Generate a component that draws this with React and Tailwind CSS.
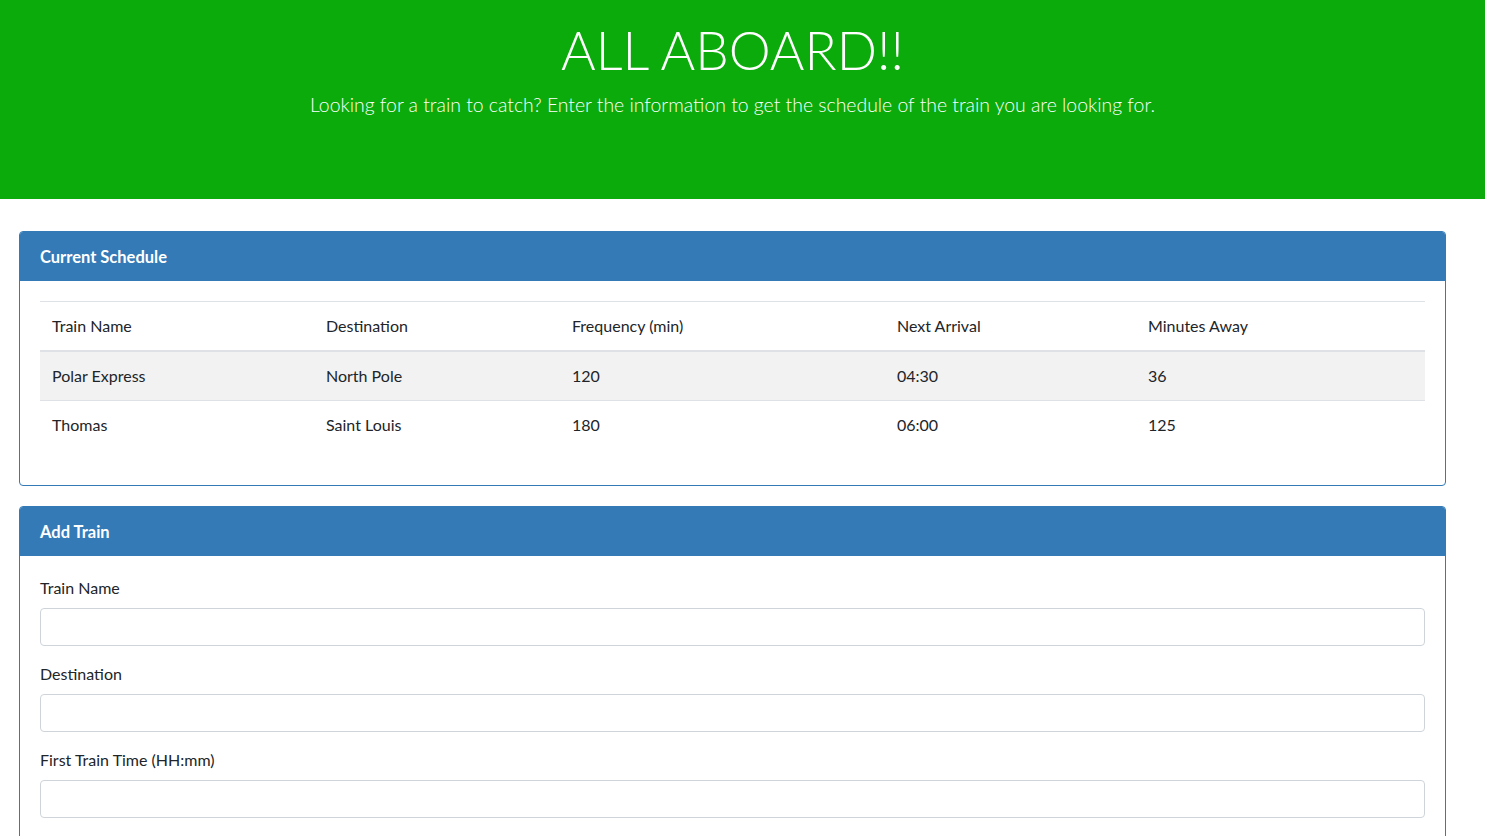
export default function App() {
  const trains = [
    { name: 'Polar Express', dest: 'North Pole', freq: 120, next: '04:30', away: 36 },
    { name: 'Thomas', dest: 'Saint Louis', freq: 180, next: '06:00', away: 125 },
  ];

  return (
    <div className="min-h-screen bg-white text-[#212529] font-['Lato','Open_Sans',sans-serif] text-base leading-6">
      {/* Jumbotron */}
      <div className="h-[199px] bg-[#0aab0a] text-white text-center pt-[16px] pr-[20px]">
        <h1 className="text-[53px] leading-[68px] font-light">ALL ABOARD!!</h1>
        <p className="mt-[6px] text-[19.4px] leading-[30px] font-light">
          Looking for a train to catch? Enter the information to get the schedule of the train you are looking for.
        </p>
      </div>

      <div className="pl-[19px] pr-[39px] pt-[32px]">
        {/* Schedule */}
        <div className="border border-[#337ab7] rounded-[4px] overflow-hidden">
          <div className="h-[49px] bg-[#337ab7] text-white font-bold text-[16.5px] px-[20px] flex items-center">
            Current Schedule
          </div>
          <div className="p-[20px]">
            <table className="w-full mb-[16px] border-collapse text-left">
              <thead>
                <tr className="border-t border-[#dee2e6] border-b-2">
                  <th className="w-[274px] font-normal px-[12px] py-[12px]">Train Name</th>
                  <th className="w-[246px] font-normal px-[12px] py-[12px]">Destination</th>
                  <th className="w-[325px] font-normal px-[12px] py-[12px]">Frequency (min)</th>
                  <th className="w-[251px] font-normal px-[12px] py-[12px]">Next Arrival</th>
                  <th className="font-normal px-[12px] py-[12px]">Minutes Away</th>
                </tr>
              </thead>
              <tbody>
                {trains.map((t, i) => (
                  <tr key={t.name} className={i % 2 === 0 ? 'bg-[#f2f2f2] border-b border-[#dee2e6]' : ''}>
                    <td className="px-[12px] py-[12px]">{t.name}</td>
                    <td className="px-[12px] py-[12px]">{t.dest}</td>
                    <td className="px-[12px] py-[12px]">{t.freq}</td>
                    <td className="px-[12px] py-[12px]">{t.next}</td>
                    <td className="px-[12px] py-[12px]">{t.away}</td>
                  </tr>
                ))}
              </tbody>
            </table>
          </div>
        </div>

        {/* Add train */}
        <div className="mt-[20px] border border-[#337ab7] rounded-[4px] overflow-hidden">
          <div className="h-[49px] bg-[#337ab7] text-white font-bold text-[16.5px] px-[20px] flex items-center">
            Add Train
          </div>
          <form className="p-[20px]">
            {['Train Name', 'Destination', 'First Train Time (HH:mm)'].map((label) => (
              <div key={label} className="mb-[16px]">
                <label className="block mb-[8px]">{label}</label>
                <input
                  type="text"
                  className="block w-full h-[38px] border border-[#ced4da] rounded-[4px] px-[12px] bg-white"
                />
              </div>
            ))}
          </form>
        </div>
      </div>
    </div>
  );
}
